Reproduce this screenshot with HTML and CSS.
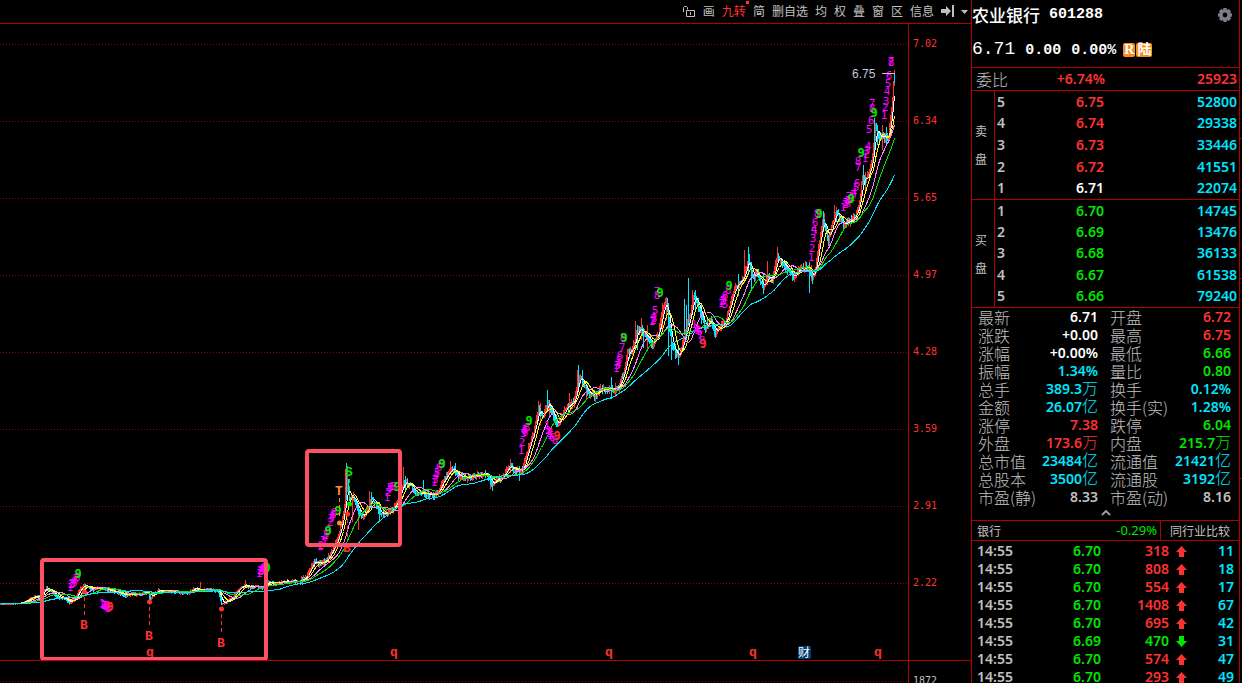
FILE: index.html
```
<!DOCTYPE html>
<html lang="zh-CN">
<head>
    <meta charset="UTF-8">
    <title>农业银行 601288</title>
    <link rel="stylesheet" href="styles.css">
</head>
<body>
    <main class="chart-side">
        <nav class="toolbar">
            <button type="button" aria-label="锁定">
                <svg class="lock-icon" width="14" height="12" viewBox="0 0 14 12" fill="none" stroke="currentColor">
                    <path d="M1.5 7V2.5L2.5 1.5H4.5L5.5 2.5V4.5M4.5 5.5H12.5V11.5H4.5ZM8.5 7V10"/>
                </svg>
            </button>
            <button type="button">画</button>
            <button type="button" class="hot">九转</button>
            <button type="button">简</button>
            <button type="button">删自选</button>
            <button type="button">均</button>
            <button type="button">权</button>
            <button type="button">叠</button>
            <button type="button">窗</button>
            <button type="button">区</button>
            <button type="button">信息</button>
            <button type="button" aria-label="跳到最后">
                <svg width="13" height="12" viewBox="0 0 13 12" fill="currentColor">
                    <path d="M0 4H5V1L10 6L5 11V8H0ZM11 0H13V12H11Z"/>
                </svg>
            </button>
            <button type="button" aria-label="更多">
                <svg width="7" height="12" viewBox="0 0 7 12" fill="currentColor"><path d="M0 5H7L3.5 9Z"/></svg>
            </button>
        </nav>

        <div class="plot">
            <svg id="kline" class="kline" viewBox="0 24 908 636" preserveAspectRatio="xMaxYMin meet"></svg>
            <ul class="axis">
                <li>7.02</li>
                <li>6.34</li>
                <li>5.65</li>
                <li>4.97</li>
                <li>4.28</li>
                <li>3.59</li>
                <li>2.91</li>
                <li>2.22</li>
            </ul>
        </div>

        <div class="volume">
            <div class="volume-grid"></div>
            <div class="volume-axis">1872</div>
        </div>
    </main>

    <aside class="quote">
        <header class="quote-head">
            <div class="name-row">
                <h1>农业银行 <span class="code">601288</span></h1>
                <button type="button" aria-label="设置">
                    <svg width="14" height="14" viewBox="0 0 14 14">
                        <path fill="#7d7f88" fill-rule="evenodd" d="M5.5 0H8.5L9 2L10.8 1L13 3.2L12 5L14 5.5V8.5L12 9L13 10.8L10.8 13L9 12L8.5 14H5.5L5 12L3.2 13L1 10.8L2 9L0 8.5V5.5L2 5L1 3.2L3.2 1L5 2ZM7 4.6A2.4 2.4 0 1 0 7 9.4A2.4 2.4 0 1 0 7 4.6Z"/>
                    </svg>
                </button>
            </div>
            <div class="price-row">
                <span class="price">6.71</span>
                <span class="change">0.00</span>
                <span class="change">0.00%</span>
                <span class="tags"><b>R</b><b>陆</b></span>
            </div>
        </header>

        <div class="ratio">
            <span>委比</span>
            <b class="up">+6.74%</b>
            <b class="up">25923</b>
        </div>

        <table class="orders">
            <tbody>
                <tr><th class="side" rowspan="5" scope="rowgroup">卖<br>盘</th><td>5</td><td class="up">6.75</td><td class="vol">52800</td></tr>
                <tr><td>4</td><td class="up">6.74</td><td class="vol">29338</td></tr>
                <tr><td>3</td><td class="up">6.73</td><td class="vol">33446</td></tr>
                <tr><td>2</td><td class="up">6.72</td><td class="vol">41551</td></tr>
                <tr><td>1</td><td class="flat">6.71</td><td class="vol">22074</td></tr>
            </tbody>
        </table>
        <table class="orders">
            <tbody>
                <tr><th class="side" rowspan="5" scope="rowgroup">买<br>盘</th><td>1</td><td class="down">6.70</td><td class="vol">14745</td></tr>
                <tr><td>2</td><td class="down">6.69</td><td class="vol">13476</td></tr>
                <tr><td>3</td><td class="down">6.68</td><td class="vol">36133</td></tr>
                <tr><td>4</td><td class="down">6.67</td><td class="vol">61538</td></tr>
                <tr><td>5</td><td class="down">6.66</td><td class="vol">79240</td></tr>
            </tbody>
        </table>

        <table class="details">
            <tbody>
                <tr><th>最新</th><td class="flat">6.71</td><th>开盘</th><td class="up">6.72</td></tr>
                <tr><th>涨跌</th><td class="flat">+0.00</td><th>最高</th><td class="up">6.75</td></tr>
                <tr><th>涨幅</th><td class="flat">+0.00%</td><th>最低</th><td class="down">6.66</td></tr>
                <tr><th>振幅</th><td class="vol">1.34%</td><th>量比</th><td class="down">0.80</td></tr>
                <tr><th>总手</th><td class="vol">389.3<i>万</i></td><th>换手</th><td class="vol">0.12%</td></tr>
                <tr><th>金额</th><td class="vol">26.07<i>亿</i></td><th>换手(实)</th><td class="vol">1.28%</td></tr>
                <tr><th>涨停</th><td class="up">7.38</td><th>跌停</th><td class="down">6.04</td></tr>
                <tr><th>外盘</th><td class="up">173.6<i>万</i></td><th>内盘</th><td class="down">215.7<i>万</i></td></tr>
                <tr><th>总市值</th><td class="vol">23484<i>亿</i></td><th>流通值</th><td class="vol">21421<i>亿</i></td></tr>
                <tr><th>总股本</th><td class="vol">3500<i>亿</i></td><th>流通股</th><td class="vol">3192<i>亿</i></td></tr>
                <tr><th>市盈(静)</th><td>8.33</td><th>市盈(动)</th><td>8.16</td></tr>
            </tbody>
        </table>
        <button type="button" class="fold" aria-label="收起">
            <svg width="10" height="6" viewBox="0 0 10 6" fill="none" stroke="#999" stroke-width="2"><path d="M1 5L5 1L9 5"/></svg>
        </button>

        <div class="sector">
            <a href="#">银行</a>
            <span class="down">-0.29%</span>
            <button type="button">同行业比较</button>
        </div>

        <table class="ticks">
            <tbody>
                <tr><td>14:55</td><td class="down">6.70</td><td class="up">318</td><td><svg class="arrow up" viewBox="0 0 11 11"><path d="M5.5 0L11 6H8V11H3V6H0Z"/></svg></td><td class="vol">11</td></tr>
                <tr><td>14:55</td><td class="down">6.70</td><td class="up">808</td><td><svg class="arrow up" viewBox="0 0 11 11"><path d="M5.5 0L11 6H8V11H3V6H0Z"/></svg></td><td class="vol">18</td></tr>
                <tr><td>14:55</td><td class="down">6.70</td><td class="up">554</td><td><svg class="arrow up" viewBox="0 0 11 11"><path d="M5.5 0L11 6H8V11H3V6H0Z"/></svg></td><td class="vol">17</td></tr>
                <tr><td>14:55</td><td class="down">6.70</td><td class="up">1408</td><td><svg class="arrow up" viewBox="0 0 11 11"><path d="M5.5 0L11 6H8V11H3V6H0Z"/></svg></td><td class="vol">67</td></tr>
                <tr><td>14:55</td><td class="down">6.70</td><td class="up">695</td><td><svg class="arrow up" viewBox="0 0 11 11"><path d="M5.5 0L11 6H8V11H3V6H0Z"/></svg></td><td class="vol">42</td></tr>
                <tr><td>14:55</td><td class="down">6.69</td><td class="down">470</td><td><svg class="arrow down" viewBox="0 0 11 11"><path d="M5.5 11L0 5H3V0H8V5H11Z"/></svg></td><td class="vol">31</td></tr>
                <tr><td>14:55</td><td class="down">6.70</td><td class="up">574</td><td><svg class="arrow up" viewBox="0 0 11 11"><path d="M5.5 0L11 6H8V11H3V6H0Z"/></svg></td><td class="vol">47</td></tr>
                <tr><td>14:55</td><td class="down">6.70</td><td class="up">293</td><td><svg class="arrow up" viewBox="0 0 11 11"><path d="M5.5 0L11 6H8V11H3V6H0Z"/></svg></td><td class="vol">49</td></tr>
            </tbody>
        </table>
    </aside>
    <div class="rail"></div>

    <script src="chart.js"></script>
</body>
</html>
```
FILE: styles.css
```
:root {
    --up: #ff3232;
    --down: #00e600;
    --vol: #00e6ff;
    --text: #c0c0c0;
    --line: #b00000;
}

* {
    box-sizing: border-box;
}

body {
    margin: 0;
    height: 100vh;
    overflow: hidden;
    display: grid;
    grid-template-columns: 1fr 269px 2px;
    background: #000;
    color: var(--text);
    font-family: "Noto Sans", "Noto Sans CJK SC", sans-serif;
    font-size: 14px;
}

button {
    background: none;
    border: 0;
    padding: 0;
    color: inherit;
    font: inherit;
    cursor: pointer;
}

.up { color: var(--up); }
.down { color: var(--down); }
.vol { color: var(--vol); }
.flat { color: #fff; }

/* chart side */
.chart-side {
    display: flex;
    flex-direction: column;
    min-width: 0;
    height: 100vh;
}

.toolbar {
    display: flex;
    justify-content: flex-end;
    align-items: center;
    gap: 7px;
    height: 24px;
    padding: 0 3px 2px 0;
    border-bottom: 1px solid var(--line);
    font-family: "Noto Sans CJK SC", sans-serif;
    font-size: 12px;
    line-height: 20px;
}

.toolbar button {
    display: flex;
    position: relative;
}

.toolbar .hot {
    color: var(--up);
}

/* new-feature dot */
.toolbar .hot::after {
    content: "";
    position: absolute;
    top: 0;
    right: -3px;
    width: 3px;
    height: 3px;
    background: var(--up);
}

.plot {
    flex: 1;
    min-height: 0;
    display: grid;
    grid-template-columns: 1fr 63px;
}

.kline {
    display: block;
    width: 100%;
    height: 100%;
    overflow: visible;
}

.axis {
    margin: 0;
    padding: 11px 0 0 4px;
    list-style: none;
    display: flex;
    flex-direction: column;
    gap: 59px;
    border-left: 1px solid var(--line);
    color: var(--up);
    font-family: "DejaVu Sans Mono", monospace;
    font-size: 10px;
    line-height: 18px;
}

.volume {
    height: 23px;
    display: grid;
    grid-template-columns: 1fr 63px;
    border-top: 1px solid var(--line);
}

.volume-grid {
    height: 21px;
    background: repeating-linear-gradient(90deg, #900000 0 1px, transparent 1px 3px) bottom / 100% 1px no-repeat;
}

.volume-axis {
    border-left: 1px solid var(--line);
    padding: 11px 0 0 4px;
    font-family: "DejaVu Sans Mono", monospace;
    font-size: 10px;
    line-height: 18px;
    overflow: hidden;
}

.grid-line { stroke: #900000; stroke-dasharray: 1 2; }
.candle { fill: none; stroke-width: 1; }
.ma { fill: none; stroke-width: 1; }
.count { fill: #ff00ff; font: 11px "DejaVu Sans Mono", monospace; text-anchor: middle; }
.nine { font: bold 12px "DejaVu Sans Mono", monospace; text-anchor: middle; }
.signal { font: bold 13px "Liberation Mono", monospace; text-anchor: middle; }
.stem { stroke-dasharray: 4 3; }
.box { fill: none; stroke: #ff5064; stroke-width: 4; }
.peak { fill: #c0c8d8; font: 12px "Liberation Sans", sans-serif; }
.report { fill: #fff; font: 12px "Noto Sans CJK SC", sans-serif; text-anchor: middle; }

/* quote panel */
.quote {
    height: 100vh;
    overflow: hidden;
    border: 1px solid var(--line);
    border-width: 0 1px;
}

.quote-head {
    height: 68px;
    border-bottom: 1px solid var(--line);
    color: #fff;
}

.name-row {
    display: flex;
    justify-content: space-between;
    align-items: center;
    height: 29px;
    padding-right: 7px;
}

.name-row button {
    display: flex;
}

h1 {
    margin: 0;
    display: flex;
    align-items: center;
    gap: 9px;
    font-family: "Noto Sans CJK SC", sans-serif;
    font-size: 17px;
    font-weight: 500;
    line-height: 28px;
}

.code,
.change {
    font-family: "Liberation Mono", monospace;
    font-size: 15px;
    font-weight: bold;
}

.price-row {
    display: flex;
    align-items: baseline;
    gap: 10px;
    line-height: 40px;
}

.price {
    font-family: "Liberation Mono", monospace;
    font-size: 18px;
}

.tags {
    display: flex;
    gap: 1px;
    margin-left: -3px;
}

.tags b {
    padding: 0 1px;
    border-radius: 2px;
    background: #f78c1e;
    font-family: "Liberation Serif", "Noto Sans CJK SC", serif;
    font-size: 14px;
    line-height: 14px;
}

.ratio {
    display: grid;
    grid-template-columns: 1fr 69px 132px;
    align-items: center;
    height: 23px;
    padding: 0 2px 0 4px;
    border-bottom: 1px solid var(--line);
    text-align: right;
    line-height: 22px;
}

.ratio b {
    font-weight: 600;
}

.ratio span {
    font-family: "Noto Sans CJK SC", sans-serif;
    font-size: 16px;
    font-weight: 300;
    text-align: left;
}

table {
    width: 100%;
    border-spacing: 0;
    table-layout: fixed;
    font-weight: 600;
}

td,
th {
    padding: 0;
    text-align: right;
}

.orders {
    height: 109px;
    border-bottom: 1px solid var(--line);
    line-height: 20px;
}

.orders + .orders {
    height: 108px;
}

.orders .side {
    width: 23px;
    border-right: 1px solid var(--line);
    padding-right: 7px;
    font-family: "Noto Sans CJK SC", sans-serif;
    font-size: 12px;
    font-weight: 400;
    line-height: 28px;
}

.orders td:nth-last-child(3) {
    width: 30px;
    padding-left: 2px;
    text-align: left;
}

.orders td:nth-last-child(2) {
    width: 79px;
}

.orders .vol {
    padding-right: 2px;
}

.details th {
    width: 64px;
    padding-left: 6px;
    font-family: "Noto Sans CJK SC", sans-serif;
    font-size: 16px;
    font-weight: 300;
    line-height: 18px;
    text-align: left;
    white-space: nowrap;
}

.details td {
    width: 62px;
    height: 18px;
    line-height: 18px;
    white-space: nowrap;
}

.details th:nth-child(3) {
    width: 76px;
    padding-left: 12px;
}

.details td:last-child {
    width: auto;
    padding-right: 8px;
}

.details i {
    font-family: "Noto Sans CJK SC", sans-serif;
    font-size: 16px;
    font-style: normal;
    font-weight: 300;
    line-height: 0;
}

.fold {
    display: flex;
    justify-content: center;
    align-items: center;
    width: 100%;
    height: 14px;
}

.sector {
    display: grid;
    grid-template-columns: 1fr 80px 79px;
    height: 21px;
    border: 1px solid var(--line);
    border-width: 1px 0;
    padding-left: 5px;
    font-family: "Noto Sans CJK SC", sans-serif;
    font-size: 12px;
    line-height: 19px;
}

.sector a {
    color: inherit;
    text-decoration: none;
}

.sector span {
    padding-right: 3px;
    font-family: "Noto Sans", sans-serif;
    font-size: 13px;
    text-align: right;
}

.sector button {
    border-left: 1px solid var(--line);
}

.ticks {
    margin-top: 1px;
}

.ticks td {
    height: 18px;
    line-height: 18px;
}

.ticks td:first-child {
    width: 60px;
    padding-left: 5px;
    text-align: left;
}

.ticks td:nth-child(2) { width: 69px; }
.ticks td:nth-child(3) { width: 68px; }
.ticks td:nth-child(4) { width: 18px; }

.ticks td:last-child {
    padding-right: 5px;
}

.arrow {
    display: block;
    width: 11px;
    height: 11px;
    margin-left: auto;
    fill: currentColor;
}

/* scale marks at the window edge */
.rail {
    background:
        linear-gradient(var(--line), var(--line)) 0 138px / 2px 1px no-repeat,
        linear-gradient(var(--line), var(--line)) 0 278px / 2px 1px no-repeat,
        linear-gradient(var(--line), var(--line)) 0 478px / 2px 1px no-repeat;
}
```
FILE: chart.js
```
const svg = document.getElementById("kline");
const RED = "#ff3232", GREEN = "#00e600", CYAN = "#00e6ff", ORANGE = "#ff8c28";

function add(tag, attrs, text) {
    const el = document.createElementNS("http://www.w3.org/2000/svg", tag);
    for (const key in attrs) el.setAttribute(key, attrs[key]);
    if (text) el.textContent = text;
    svg.appendChild(el);
}

// closing price, as x,y points
const closes = [
    [0,604],[20,603],[25,601],[30,598],[36,596],[40,598],[42,592],[46,588],[50,590],[54,594],[58,597],[62,598],[66,600],[70,602],
    [74,599],[77,594],[80,588],[84,585],[88,587],[92,589],[96,588],[104,588],[108,590],[115,592],[120,593],[125,595],[130,594],
    [140,594],[148,592],[150,598],[153,594],[158,590],[168,591],[180,592],[188,592],[194,588],[200,590],[208,589],[218,591],
    [221,603],[224,602],[228,600],[232,598],[236,592],[240,587],[245,585],[250,587],[256,586],[262,588],[264,586],[268,582],
    [275,583],[285,581],[300,581],[305,577],[310,569],[313,562],[320,563],[327,559],[333,547],[338,536],[343,513],[347,483],
    [349,498],[353,497],[357,507],[360,514],[363,517],[368,507],[371,497],[375,503],[380,514],[388,513],[393,507],[398,498],
    [403,482],[410,484],[415,492],[425,493],[433,496],[438,491],[443,480],[450,470],[453,469],[458,476],[467,477],[485,474],
    [488,476],[492,484],[497,479],[502,477],[507,468],[511,465],[515,470],[522,471],[525,458],[528,447],[533,432],[538,408],
    [542,417],[548,402],[552,412],[557,424],[563,413],[570,403],[574,400],[577,381],[580,376],[585,387],[588,393],[594,395],
    [600,388],[607,390],[613,388],[618,387],[623,373],[627,353],[632,350],[636,332],[641,329],[647,337],[652,343],[658,333],
    [662,310],[666,302],[668,318],[671,343],[675,352],[679,356],[683,340],[687,325],[690,313],[693,297],[697,302],[700,313],
    [705,326],[710,319],[715,333],[720,326],[725,323],[730,303],[733,292],[738,283],[743,277],[748,259],[752,277],[757,273],
    [763,287],[768,276],[772,278],[777,256],[782,263],[787,268],[793,277],[798,268],[808,267],[812,277],[815,268],[818,245],
    [823,219],[828,240],[832,222],[836,212],[840,217],[843,226],[848,222],[855,216],[859,203],[862,176],[865,181],[868,173],
    [872,158],[875,125],[878,137],[883,136],[888,137],[891,107],[894,76]
];

// long wicks: x, top, bottom, colour
const wicks = [
    [84,583,592,RED],[69,598,605,RED],[221,594,604,CYAN],[200,582,592,RED],[245,580,588,RED],[149,591,600,CYAN],
    [345,469,505,RED],[346,463,500,CYAN],[347,466,490,RED],[352,495,522,RED],[358,505,530,RED],[369,491,510,RED],[371,492,508,CYAN],
    [379,502,522,CYAN],[403,467,485,RED],[405,476,492,CYAN],[423,480,494,CYAN],[450,461,474,RED],[455,463,476,CYAN],
    [492,478,491,CYAN],[490,476,489,RED],[510,459,473,RED],[519,466,481,CYAN],[538,401,420,RED],[540,403,425,RED],
    [547,390,408,CYAN],[549,400,417,RED],[556,415,427,CYAN],[569,393,408,RED],[577,370,392,RED],[578,365,390,CYAN],[582,370,385,CYAN],
    [586,385,399,RED],[611,377,395,CYAN],[611,385,399,CYAN],[615,383,397,RED],[635,321,345,RED],[637,325,350,CYAN],[641,318,340,RED],
    [647,325,351,RED],[643,328,348,CYAN],[662,303,330,RED],[666,297,320,RED],[668,303,356,CYAN],[671,325,360,CYAN],[678,348,365,CYAN],
    [684,299,335,CYAN],[686,305,340,CYAN],[688,278,325,CYAN],[692,290,315,RED],[695,290,312,CYAN],[701,305,324,CYAN],
    [707,317,329,CYAN],[714,328,337,RED],[738,274,296,CYAN],[744,250,283,RED],[748,247,275,CYAN],[751,262,290,CYAN],
    [763,273,294,CYAN],[767,261,285,RED],[777,247,262,RED],[793,270,280,RED],[809,262,293,CYAN],[811,265,281,RED],
    [823,211,232,CYAN],[824,213,228,RED],[834,205,220,RED],[836,211,222,CYAN],[863,165,190,CYAN],[865,172,193,RED],
    [874,118,150,CYAN],[877,125,145,CYAN],[882,125,150,RED],[886,127,144,CYAN],[894,73,83,CYAN]
];

let seed = 7;
function random() {
    seed = (seed * 16807) % 2147483647;
    return seed / 2147483647 - 0.5;
}

function priceAt(x) {
    let i = 1;
    while (i < closes.length - 1 && closes[i][0] < x) i++;
    const [x0, y0] = closes[i - 1], [x1, y1] = closes[i];
    return y0 + (y1 - y0) * (x - x0) / (x1 - x0);
}

// horizontal grid
for (let y = 44; y < 600; y += 77) {
    add("path", { class: "grid-line", d: `M0 ${y + 0.5}H908`, "shape-rendering": "crispEdges" });
}

// candles
const prices = [];
let redPath = "", cyanPath = "";
for (let x = 0; x <= 894; x++) {
    const swing = x < 30 ? 1 : x < 300 ? 3 : x < 520 ? 7 : 9;
    const y = priceAt(x) + random() * swing * 0.4;
    const prev = prices.length ? prices[x - 1] : y;
    const top = Math.min(y, prev) - Math.abs(random()) * swing;
    const bottom = Math.max(y, prev) + Math.abs(random()) * swing;
    const bar = `M${x + 0.5} ${Math.round(top)}V${Math.round(bottom) + 1}`;
    if (y <= prev) redPath += bar;
    else cyanPath += bar;
    prices.push(y);
}
for (const [x, top, bottom, color] of wicks) {
    const bar = `M${x + 0.5} ${top}V${bottom}`;
    if (color === RED) redPath += bar;
    else cyanPath += bar;
}
add("path", { class: "candle", d: redPath, stroke: RED, "shape-rendering": "crispEdges" });
add("path", { class: "candle", d: cyanPath, stroke: CYAN, "shape-rendering": "crispEdges" });

// moving averages
function average(days, color) {
    const points = prices.map((p, i) => {
        let sum = 0;
        for (let k = 0; k < days; k++) sum += prices[Math.max(0, i - k)];
        return `${i + 0.5},${(sum / days).toFixed(1)}`;
    });
    add("polyline", { class: "ma", points: points.join(" "), stroke: color, "shape-rendering": "crispEdges" });
}
average(5, "#ffffff");
average(10, "#ffff00");
average(20, "#ff80ff");
average(30, GREEN);
average(60, CYAN);

// nine-turn counts
const counts = [
    [1,70,587],[2,71,584],[3,72,583],[4,73,581],[5,74,583],[6,75,580],[7,76,578],[8,77,577],
    [1,102,603],[2,103,604],[3,104,605],[4,105,605],[5,106,606],[6,107,605],[7,108,607],[8,108,608],
    [1,259,573],[2,260,570],[3,261,571],[4,262,569],[5,263,568],[6,264,567],[7,264,570],[8,265,566],
    [1,320,546],[2,321,545],[3,323,540],[4,325,537],[5,326,534],[6,328,530],[2,330,522],[3,331,518],[4,332,516],[6,333,514],[8,334,512],
    [1,387,497],[2,388,492],[4,389,489],[5,390,487],[6,392,486],[8,394,486],
    [1,434,482],[3,435,479],[4,436,475],[5,437,472],[6,439,467],[8,441,464],
    [1,521,450],[2,522,442],[3,523,433],[4,524,430],[5,525,429],[6,525,432],[8,527,427],
    [1,547,425],[2,548,430],[3,549,433],[4,550,432],[5,551,435],[6,552,437],[8,555,440],
    [1,616,368],[3,617,365],[4,618,364],[5,619,360],[6,620,355],[7,622,347],[8,623,337],
    [1,652,321],[2,653,320],[3,654,318],[4,653,316],[5,655,310],[7,657,291],[8,657,295],
    [1,694,324],[2,696,328],[4,697,329],[5,698,330],[6,699,331],[7,700,335],[8,702,340],
    [1,721,303],[2,722,301],[3,723,300],[4,724,298],[5,725,304],[6,725,295],[8,728,290],
    [1,811,257],[2,812,248],[3,813,238],[4,814,229],[5,814,231],[6,815,222],[7,817,215],[8,817,213],
    [1,843,207],[2,845,204],[3,846,202],[4,847,201],[5,848,200],[6,848,203],[7,849,196],
    [1,852,197],[3,853,194],[4,854,192],[5,856,187],[6,857,183],[7,858,167],[8,858,161],
    [1,865,158],[2,866,154],[3,867,150],[4,868,146],[5,869,129],[6,871,120],[8,872,108],[7,872,103],
    [1,884,115],[2,885,107],[3,886,101],[4,887,91],[5,888,83],[6,889,75],[7,891,61],[8,891,62]
];
for (const [n, x, y] of counts) add("text", { class: "count", x: x, y: y + 4 }, String(n));

const nines = [
    [78,574,GREEN],[110,607,RED],[267,568,GREEN],[328,531,GREEN],[338,511,GREEN],[397,487,GREEN],[442,464,GREEN],[529,421,GREEN],
    [557,436,RED],[624,338,GREEN],[660,293,GREEN],[703,344,RED],[729,286,GREEN],[819,214,GREEN],[851,199,GREEN],[861,153,GREEN],[874,113,GREEN]
];
for (const [x, y, color] of nines) add("text", { class: "nine", x: x, y: y + 4, fill: color }, "9");

// trade signals: letter, x, letter y, dot y
const signals = [
    ["B",84,625,592,RED],["B",149,636,602,RED],["B",221,643,609,RED],
    ["B",347,548,514,RED],["T",339,491,523,ORANGE],["S",349,472,504,GREEN]
];
for (const [letter, x, y, dot, color] of signals) {
    const from = y > dot ? dot + 5 : y + 7;
    const to = y > dot ? y - 9 : dot - 5;
    add("path", { class: "stem", d: `M${x + 0.5} ${from}V${to}`, stroke: color, "shape-rendering": "crispEdges" });
    add("circle", { cx: x + 0.5, cy: dot, r: 2.5, fill: color });
    add("text", { class: "signal", x: x, y: y + 4, fill: color }, letter);
}
for (const x of [150, 394, 609, 753, 878]) add("text", { class: "signal", x: x, y: 656, fill: RED }, "q");

add("rect", { x: 798, y: 646, width: 13, height: 13, fill: "#003a70" });
add("text", { class: "report", x: 804, y: 657 }, "财");

// highest price
add("text", { class: "peak", x: 852, y: 78 }, "6.75");
add("path", { d: "M882 73.5H895", stroke: "#c0c8d8", "shape-rendering": "crispEdges" });

// highlighted ranges
add("rect", { class: "box", x: 42, y: 560, width: 224, height: 99, rx: 2 });
add("rect", { class: "box", x: 307, y: 451, width: 93, height: 94, rx: 2 });
```
